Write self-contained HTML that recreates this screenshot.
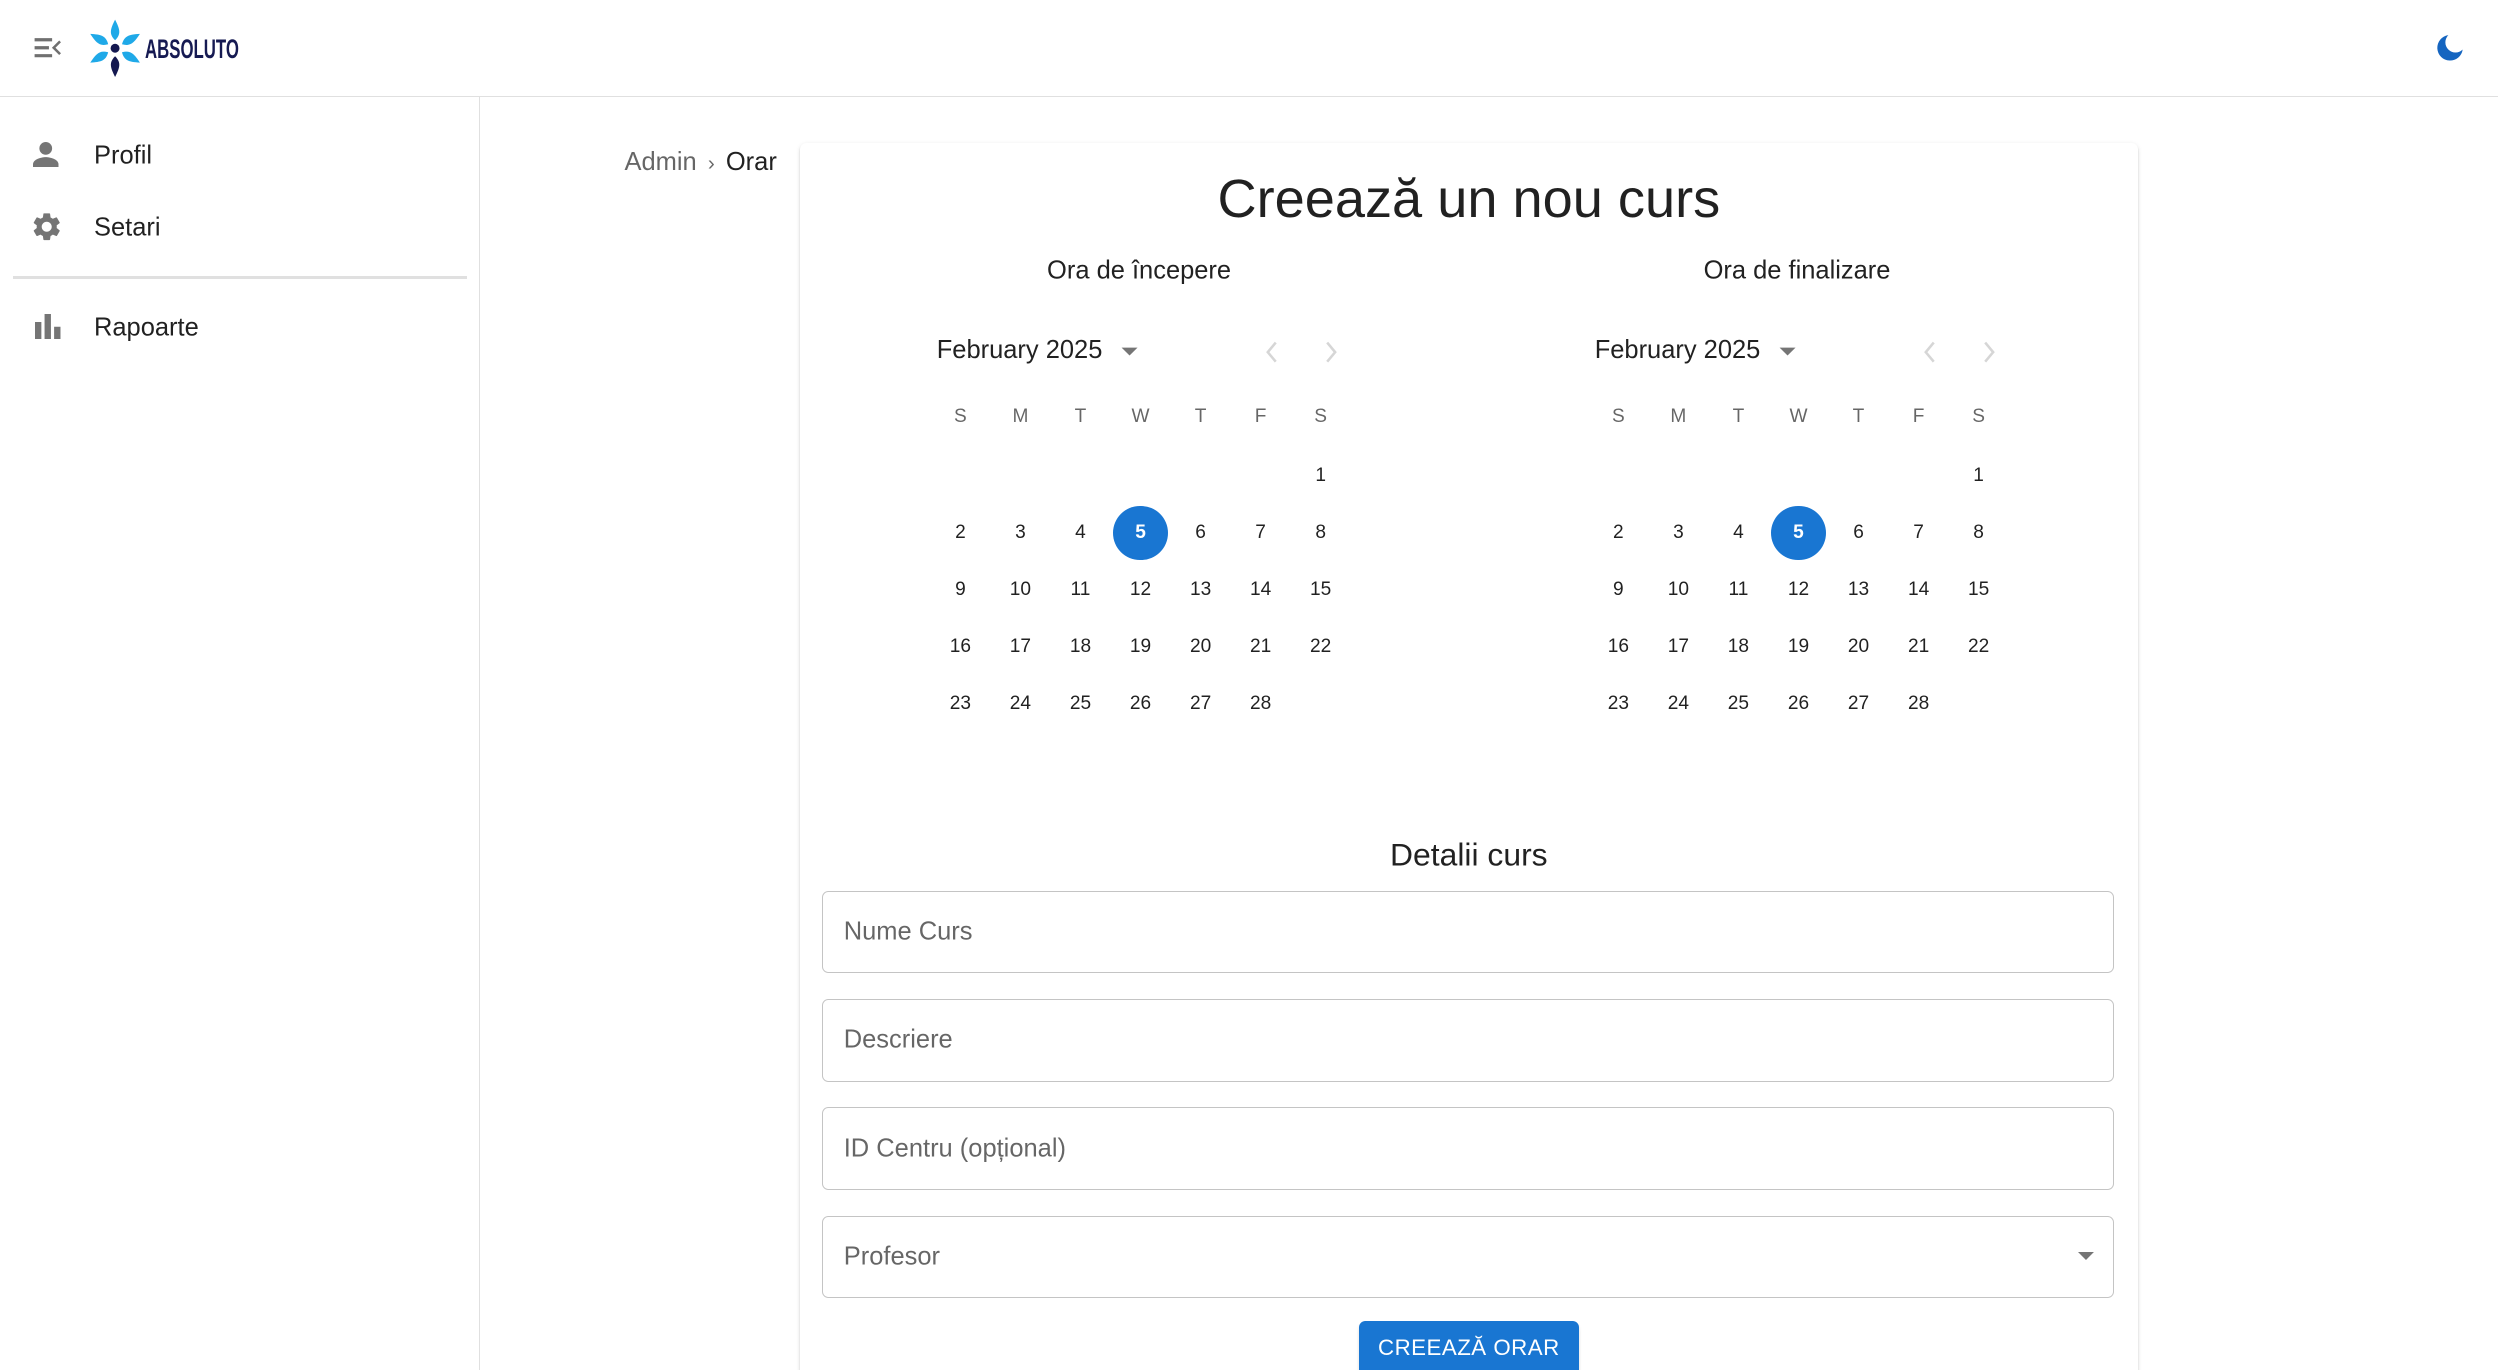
<!DOCTYPE html>
<html><head><meta charset="utf-8">
<style>
html{zoom:1.5931;overflow:hidden;height:860px}
body{margin:0;width:1568px;height:860px;overflow:hidden;background:#fff;font-family:"Liberation Sans",sans-serif;color:rgba(0,0,0,.87);position:relative}
.a{position:absolute}
.hdr{left:0;top:0;width:1568px;height:61px;border-bottom:1px solid #e0e0e0;box-sizing:border-box}
.side{left:0;top:61px;width:301px;height:799px;border-right:1px solid #e0e0e0;box-sizing:border-box}
.item{font-size:16px;left:59px;transform:translateY(-50%);margin-top:1px}
.card{left:502px;top:90px;width:840px;height:790px;background:#fff;border-radius:4px;box-shadow:0 2px 1px -1px rgba(0,0,0,.2),0 1px 1px 0 rgba(0,0,0,.14),0 1px 3px 0 rgba(0,0,0,.12)}
.c{transform:translate(-50%,-50%);white-space:nowrap;margin-top:1px}
.grid{display:grid;grid-template-columns:repeat(7,37.7px);grid-auto-rows:35.8px;font-size:12px;text-align:center}
.grid span{display:flex;align-items:center;justify-content:center}
.wk span{color:rgba(0,0,0,.6)}
.sel b{width:34px;height:34px;border-radius:50%;background:#1976d2;color:#fff;display:flex;align-items:center;justify-content:center;font-weight:bold}
.f{left:516px;width:811px;height:52px;border:1px solid #c4c4c4;border-radius:4px;box-sizing:border-box}
.f span{position:absolute;left:13px;top:50%;transform:translateY(-50%);font-size:16px;color:rgba(0,0,0,.6)}
</style></head><body>
<div class="a hdr"></div>
<svg class="a" style="left:21px;top:22px" width="18" height="16" viewBox="0 0 18 16"><path d="M1 3h11M1 8h9M1 13h11" stroke="#707070" stroke-width="2"/><path d="M17 4l-4 4 4 4" stroke="#707070" stroke-width="1.6" fill="none"/></svg>
<svg class="a" style="left:55px;top:11px" width="36" height="38" viewBox="0 0 36 38">
<g fill="#1fa9e8">
<path d="M17 1C14 7 13 10 17 14C21 10 20 7 17 1Z"/>
<path d="M17 1C14 7 13 10 17 14C21 10 20 7 17 1Z" transform="rotate(60 17 19)"/>
<path d="M17 1C14 7 13 10 17 14C21 10 20 7 17 1Z" transform="rotate(120 17 19)"/>
<path d="M17 1C14 7 13 10 17 14C21 10 20 7 17 1Z" transform="rotate(240 17 19)"/>
<path d="M17 1C14 7 13 10 17 14C21 10 20 7 17 1Z" transform="rotate(300 17 19)"/>
</g>
<path d="M17 37C14 31 13 28 17 24C21 28 20 31 17 37Z" fill="#141850"/>
<circle cx="17" cy="19" r="2.8" fill="#141850"/>
</svg>
<div class="a" style="left:91px;top:21px;font-size:17px;font-weight:bold;color:#161a52;transform:scaleX(.62);transform-origin:left top">ABSOLUTO</div>
<svg class="a" style="left:1528px;top:20px" width="20" height="20" viewBox="0 0 20 20"><path d="M9 2A8 8 0 1 0 18 11A5.5 5.5 0 0 1 9 2Z" fill="#1565c0"/></svg>

<div class="a side"></div>
<svg class="a" style="left:21px;top:89px" width="16" height="16" viewBox="0 0 16 16"><circle cx="8" cy="4" r="4" fill="#757575"/><path d="M0 16v-2c0-3 5-4.5 8-4.5s8 1.5 8 4.5v2z" fill="#757575"/></svg>
<div class="a item" style="top:97px">Profil</div>
<svg class="a" style="left:19px;top:132px" width="21" height="21" viewBox="0 0 24 24"><path fill="#757575" d="M19.14 12.94c.04-.3.06-.61.06-.94 0-.32-.02-.64-.07-.94l2.03-1.58a.49.49 0 0 0 .12-.61l-1.92-3.32a.488.488 0 0 0-.59-.22l-2.39.96c-.5-.38-1.030-.7-1.62-.94l-.36-2.54a.484.484 0 0 0-.48-.41h-3.84c-.24 0-.43.17-.47.41l-.36 2.54c-.59.24-1.13.57-1.62.94l-2.39-.96c-.22-.08-.47 0-.59.22L2.74 8.870c-.12.21-.08.47.12.61l2.03 1.58c-.05.3-.09.63-.09.94s.02.64.07.94l-2.03 1.58a.49.49 0 0 0-.12.61l1.92 3.32c.12.22.37.29.59.22l2.39-.96c.5.38 1.03.7 1.62.94l.36 2.54c.05.24.24.41.48.41h3.84c.24 0 .44-.17.47-.41l.36-2.54c.59-.24 1.13-.56 1.62-.94l2.39.96c.22.08.47 0 .59-.22l1.92-3.32c.12-.22.07-.47-.12-.61l-2.01-1.58zM12 15.6c-1.98 0-3.6-1.62-3.6-3.6s1.62-3.6 3.6-3.6 3.6 1.62 3.6 3.6-1.62 3.6-3.6 3.6z"/></svg>
<div class="a item" style="top:142px">Setari</div>
<div class="a" style="left:8px;top:173px;width:285px;height:2px;background:#e0e0e0"></div>
<svg class="a" style="left:22px;top:197px" width="16" height="16" viewBox="0 0 16 16"><path fill="#757575" d="M0 5h4v11H0zM6 0h4v16H6zM12 8h4v8h-4z"/></svg>
<div class="a item" style="top:205px">Rapoarte</div>

<div class="a" style="left:392px;top:93px;font-size:16px;color:rgba(0,0,0,.6)">Admin<span style="margin:0 7px;font-size:13px">›</span><span style="color:rgba(0,0,0,.87)">Orar</span></div>

<div class="a card"></div>
<div class="a c" style="left:922px;top:124px;font-size:34px">Creează un nou curs</div>
<div class="a c" style="left:715px;top:169px;font-size:16px">Ora de începere</div>
<div class="a c" style="left:1128px;top:169px;font-size:16px">Ora de finalizare</div>

<div class="a" style="left:588px;top:211px;font-size:16px">February 2025</div>
<svg class="a" style="left:703px;top:217px" width="12" height="8"><path d="M1 1h10L6 6z" fill="#757575"/></svg>
<svg class="a" style="left:793px;top:214px" width="10" height="14"><path d="M8 1L3 7l5 6" stroke="#d6d6d6" stroke-width="1.6" fill="none"/></svg>
<svg class="a" style="left:831px;top:214px" width="10" height="14"><path d="M2 1l5 6-5 6" stroke="#d6d6d6" stroke-width="1.6" fill="none"/></svg>
<div class="a grid wk" style="left:584px;top:244px"><span>S</span><span>M</span><span>T</span><span>W</span><span>T</span><span>F</span><span>S</span></div>
<div class="a grid" style="left:584px;top:281px">
<span style="grid-column-start:7">1</span>
<span>2</span><span>3</span><span>4</span><span class="sel"><b>5</b></span><span>6</span><span>7</span><span>8</span>
<span>9</span><span>10</span><span>11</span><span>12</span><span>13</span><span>14</span><span>15</span>
<span>16</span><span>17</span><span>18</span><span>19</span><span>20</span><span>21</span><span>22</span>
<span>23</span><span>24</span><span>25</span><span>26</span><span>27</span><span>28</span>
</div>

<div class="a" style="left:1001px;top:211px;font-size:16px">February 2025</div>
<svg class="a" style="left:1116px;top:217px" width="12" height="8"><path d="M1 1h10L6 6z" fill="#757575"/></svg>
<svg class="a" style="left:1206px;top:214px" width="10" height="14"><path d="M8 1L3 7l5 6" stroke="#d6d6d6" stroke-width="1.6" fill="none"/></svg>
<svg class="a" style="left:1244px;top:214px" width="10" height="14"><path d="M2 1l5 6-5 6" stroke="#d6d6d6" stroke-width="1.6" fill="none"/></svg>
<div class="a grid wk" style="left:997px;top:244px"><span>S</span><span>M</span><span>T</span><span>W</span><span>T</span><span>F</span><span>S</span></div>
<div class="a grid" style="left:997px;top:281px">
<span style="grid-column-start:7">1</span>
<span>2</span><span>3</span><span>4</span><span class="sel"><b>5</b></span><span>6</span><span>7</span><span>8</span>
<span>9</span><span>10</span><span>11</span><span>12</span><span>13</span><span>14</span><span>15</span>
<span>16</span><span>17</span><span>18</span><span>19</span><span>20</span><span>21</span><span>22</span>
<span>23</span><span>24</span><span>25</span><span>26</span><span>27</span><span>28</span>
</div>

<div class="a c" style="left:922px;top:536px;font-size:20px">Detalii curs</div>
<div class="a f" style="top:559px"><span>Nume Curs</span></div>
<div class="a f" style="top:627px"><span>Descriere</span></div>
<div class="a f" style="top:695px"><span>ID Centru (opțional)</span></div>
<div class="a f" style="top:763px"><span>Profesor</span>
<svg style="position:absolute;right:12px;top:22px" width="10" height="6"><path d="M0 0h10L5 5z" fill="#757575"/></svg></div>
<div class="a" style="left:853px;top:829px;width:138px;height:40px;background:#1976d2;border-radius:4px;box-shadow:0 3px 1px -2px rgba(0,0,0,.2),0 2px 2px 0 rgba(0,0,0,.14);color:#fff;font-size:14px;text-align:center;line-height:34px;letter-spacing:.3px">CREEAZĂ ORAR</div>
</body></html>
